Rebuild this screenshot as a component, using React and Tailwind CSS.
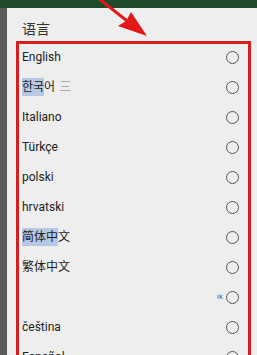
const languages = [
  { label: 'English' },
  { label: '한국어', hl: 2, tail: '三' },
  { label: 'Italiano' },
  { label: 'Türkçe' },
  { label: 'polski' },
  { label: 'hrvatski' },
  { label: '简体中文', hl: 3 },
  { label: '繁体中文' },
  { label: '', ghost: 'ık' },
  { label: 'čeština' },
  { label: 'Español' },
]

function Radio() {
  return <span className="block w-[13px] h-[13px] rounded-full border-[1.5px] border-[#555]" />
}

export default function App() {
  return (
    <div
      className="relative w-[257px] h-[355px] overflow-hidden bg-[#5a5a5a] flex flex-col"
      style={{ fontFamily: 'Roboto, "Noto Sans CJK SC", "Noto Sans CJK KR", sans-serif' }}
    >
      <div className="h-[8px] bg-[#1f4a2a] shrink-0" />
      <div className="flex flex-1">
        <div className="w-[7px] bg-[#5b5b5b]" />
        <div className="flex-1 bg-[#eeeeee] flex flex-col">
          <p className="pl-[15px] pt-[13px] h-[34px] text-[14px] leading-[16px] text-[#333]">语言</p>
          <ul className="flex flex-col">
            {languages.map((l, i) => (
              <li key={i} className="h-[30px] flex items-center justify-between pl-[15px] pr-[18px]">
                <span className="text-[12px] text-[#222] flex items-center whitespace-nowrap">
                  {l.hl ? (
                    <>
                      <span className="bg-[#b7c8e4]">{l.label.slice(0, l.hl)}</span>
                      {l.label.slice(l.hl)}
                    </>
                  ) : (
                    l.label
                  )}
                  {l.tail && <span className="ml-[4px] text-[#aaa]">{l.tail}</span>}
                </span>
                <span className="flex items-center gap-[3px]">
                  {l.ghost && <span className="text-[8px] text-[#666]">{l.ghost}</span>}
                  <Radio />
                </span>
              </li>
            ))}
          </ul>
        </div>
      </div>

      {/* red annotation box */}
      <div className="absolute left-[16px] top-[41px] w-[235px] h-[330px] border-[3px] border-[#d41f1f]" />

      {/* red arrow */}
      <svg className="absolute left-0 top-0" width="257" height="60" viewBox="0 0 257 60">
        <line x1="98" y1="-2" x2="131" y2="24" stroke="#e01818" strokeWidth="3" />
        <polygon points="147,36 118,26 126,21 131,12" fill="#e01818" />
      </svg>
    </div>
  )
}
